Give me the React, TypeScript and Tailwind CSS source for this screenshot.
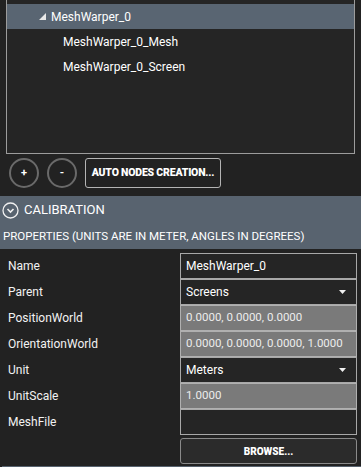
import React from 'react'

const font = { fontFamily: 'Roboto, "Noto Sans", sans-serif' }

type Row = { label: string; value: string; kind: 'text' | 'select' | 'readonly' }

const rows: Row[] = [
  { label: 'Name', value: 'MeshWarper_0', kind: 'text' },
  { label: 'Parent', value: 'Screens', kind: 'select' },
  { label: 'PositionWorld', value: '0.0000, 0.0000, 0.0000', kind: 'readonly' },
  { label: 'OrientationWorld', value: '0.0000, 0.0000, 0.0000, 1.0000', kind: 'readonly' },
  { label: 'Unit', value: 'Meters', kind: 'select' },
  { label: 'UnitScale', value: '1.0000', kind: 'readonly' },
  { label: 'MeshFile', value: '', kind: 'text' },
]

function PropRow({ row }: { row: Row }) {
  const boxClass =
    row.kind === 'readonly'
      ? 'bg-[#7a7a7a] text-[#ececec] border-[#b0b0b0] text-[11.5px]'
      : 'bg-[#252525] text-white border-[#a8a8a8] text-[12px]'
  return (
    <div className="flex h-[26px] items-center">
      <div className="w-[180px] pl-[8px] text-[12px] text-[#f2f2f2]">{row.label}</div>
      <div className={`flex h-[26px] w-[177px] items-center whitespace-nowrap border px-[5px] ${boxClass}`}>
        <span className="flex-1">{row.value}</span>
        {row.kind === 'select' && (
          <svg width="7" height="4" viewBox="0 0 7 4" className="mr-[5px]">
            <path d="M0 0 L7 0 L3.5 4 Z" fill="#f0f0f0" />
          </svg>
        )}
      </div>
    </div>
  )
}

export default function App() {
  return (
    <div className="h-[467px] w-[361px] overflow-hidden bg-[#222222] text-white" style={font}>
      {/* Tree */}
      <div className="ml-[6px] h-[154px] w-[349px] border-x border-b border-[#9c9c9c] bg-[#252525] pt-[4px]">
        <div className="flex h-[25px] items-center bg-[#596572] pl-[32px] text-[12px]">
          <svg width="7" height="7" viewBox="0 0 7 7" className="mr-[5px]">
            <path d="M7 0 L7 7 L0 7 Z" fill="#e8e8e8" />
          </svg>
          <span>MeshWarper_0</span>
        </div>
        <div className="flex h-[25px] items-center pl-[56px] text-[12px]">MeshWarper_0_Mesh</div>
        <div className="flex h-[25px] items-center pl-[56px] text-[12px]">MeshWarper_0_Screen</div>
      </div>

      {/* Buttons */}
      <div className="ml-[9px] mt-[4px] flex h-[30px] items-center gap-[8px]">
        <div className="flex h-[30px] w-[30px] items-center justify-center rounded-full border-2 border-[#6a6a6a] text-[11px] font-bold">
          +
        </div>
        <div className="flex h-[30px] w-[30px] items-center justify-center rounded-full border-2 border-[#6a6a6a] text-[11px] font-bold">
          -
        </div>
        <div className="flex h-[30px] w-[136px] items-center justify-center rounded-[3px] border border-[#b4b4b4] text-[10.5px] font-black tracking-[-0.2px]">
          AUTO NODES CREATION...
        </div>
      </div>

      {/* Calibration header */}
      <div className="mt-[8px] bg-[#58636f]">
        <div className="flex h-[28px] items-center pl-[2px]">
          <svg width="17" height="17" viewBox="0 0 17 17">
            <circle cx="8.5" cy="8.5" r="7.5" fill="none" stroke="#f0f0f0" strokeWidth="1.3" />
            <path d="M5.5 7 L8.5 10 L11.5 7" fill="none" stroke="#f0f0f0" strokeWidth="1.6" />
          </svg>
          <span className="ml-[5px] text-[13px]">CALIBRATION</span>
        </div>
        <div className="flex h-[25px] items-center pl-[3px] text-[11.5px]">
          PROPERTIES (UNITS ARE IN METER, ANGLES IN DEGREES)
        </div>
      </div>

      {/* Properties */}
      <div className="mt-[4px]">
        {rows.map((r) => (
          <PropRow key={r.label} row={r} />
        ))}
      </div>

      <div className="ml-[180px] mt-[3px] flex h-[26px] w-[177px] items-center justify-center rounded-[3px] border border-[#8a8a8a] bg-[#2b2b2b] text-[10px] font-black">
        BROWSE...
      </div>
      <div className="ml-[2px] mt-[2px] h-[3px] bg-[#58636f]" />
    </div>
  )
}
